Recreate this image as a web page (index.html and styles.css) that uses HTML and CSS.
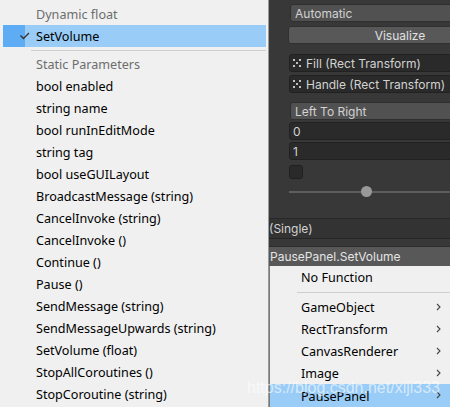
FILE: index.html
```html
<!DOCTYPE html>
<html>
<head>
<meta charset="utf-8">
<link rel="stylesheet" href="styles.css">
</head>
<body>
<div class="screen">
  <div class="inspector">
    <div class="field dropdown">Automatic</div>
    <div class="button">Visualize</div>
    <div class="field object first-object"><svg class="obj-icon" width="8" height="8" viewBox="0 0 8 8"><rect x="0" y="0" width="2" height="2"/><rect x="6" y="0" width="2" height="2"/><rect x="0" y="6" width="2" height="2"/><rect x="6" y="6" width="2" height="2"/><rect x="3" y="3" width="2" height="2"/></svg>Fill (Rect Transform)</div>
    <div class="field object"><svg class="obj-icon" width="8" height="8" viewBox="0 0 8 8"><rect x="0" y="0" width="2" height="2"/><rect x="6" y="0" width="2" height="2"/><rect x="0" y="6" width="2" height="2"/><rect x="6" y="6" width="2" height="2"/><rect x="3" y="3" width="2" height="2"/></svg>Handle (Rect Transform)</div>
    <div class="field dropdown direction">Left To Right</div>
    <div class="field input">0</div>
    <div class="field input">1</div>
    <div class="checkbox"></div>
    <div class="slider"><div class="track"></div><div class="thumb"></div></div>
    <div class="event-row">(Single)</div>
    <div class="event-bar">PausePanel.SetVolume</div>
  </div>

  <div class="menu">
    <div class="item header">Dynamic float</div>
    <div class="item selected"><span class="check"><svg width="22" height="22" viewBox="0 0 22 22"><path d="M6.5 10.5 L9.5 13.5 L15 8" fill="none" stroke="#333" stroke-width="1.4"/></svg></span>SetVolume</div>
    <div class="sep"></div>
    <div class="item header">Static Parameters</div>
    <div class="item">bool enabled</div>
    <div class="item">string name</div>
    <div class="item">bool runInEditMode</div>
    <div class="item">string tag</div>
    <div class="item">bool useGUILayout</div>
    <div class="item">BroadcastMessage (string)</div>
    <div class="item">CancelInvoke (string)</div>
    <div class="item">CancelInvoke ()</div>
    <div class="item">Continue ()</div>
    <div class="item">Pause ()</div>
    <div class="item">SendMessage (string)</div>
    <div class="item">SendMessageUpwards (string)</div>
    <div class="item">SetVolume (float)</div>
    <div class="item">StopAllCoroutines ()</div>
    <div class="item">StopCoroutine (string)</div>
  </div>

  <div class="submenu">
    <div class="sitem">No Function</div>
    <div class="ssep"></div>
    <div class="sitem">GameObject<svg class="arrow" width="5" height="8" viewBox="0 0 5 8"><path d="M1 1 L4 4 L1 7" fill="none" stroke="#444" stroke-width="1.1"/></svg></div>
    <div class="sitem">RectTransform<svg class="arrow" width="5" height="8" viewBox="0 0 5 8"><path d="M1 1 L4 4 L1 7" fill="none" stroke="#444" stroke-width="1.1"/></svg></div>
    <div class="sitem">CanvasRenderer<svg class="arrow" width="5" height="8" viewBox="0 0 5 8"><path d="M1 1 L4 4 L1 7" fill="none" stroke="#444" stroke-width="1.1"/></svg></div>
    <div class="sitem">Image<svg class="arrow" width="5" height="8" viewBox="0 0 5 8"><path d="M1 1 L4 4 L1 7" fill="none" stroke="#444" stroke-width="1.1"/></svg></div>
    <div class="sitem active">PausePanel<svg class="arrow" width="5" height="8" viewBox="0 0 5 8"><path d="M1 1 L4 4 L1 7" fill="none" stroke="#444" stroke-width="1.1"/></svg></div>
  </div>

  <div class="watermark">https://blog.csdn.net/xiji333</div>
</div>
</body>
</html>
```

FILE: styles.css
```css
* { box-sizing: border-box; }
html, body { margin: 0; padding: 0; }
body { width: 450px; height: 407px; overflow: hidden; background: #383838; }

.screen {
  position: relative;
  width: 450px;
  height: 407px;
  overflow: hidden;
  background: #383838;
}

.inspector {
  width: 520px;
  padding: 4px 8px 0 0;
  display: flex;
  flex-direction: column;
  font-family: Inter, "Noto Sans", sans-serif;
  font-size: 12px;
  color: #d2d2d2;
}

.field {
  height: 18px;
  margin-left: 290px;
  border-radius: 3px;
  display: flex;
  align-items: center;
  padding-left: 4px;
  white-space: nowrap;
}
.dropdown { background: #515151; border: 1px solid #2f2f2f; }
.button {
  height: 18px;
  margin: 4px 0 0 288px;
  background: #585858;
  border: 1px solid #303030;
  border-radius: 3px;
  display: flex;
  align-items: center;
  justify-content: center;
  color: #e0e0e0;
}
.object, .input { background: #2a2a2a; border: 1px solid #212121; margin-left: 289px; padding-left: 3px; }
.object { margin-top: 3px; }
.first-object { margin-top: 10px; }
.obj-icon { fill: #c0c0c0; margin-right: 5px; flex: none; }
.direction { margin-top: 9px; }
.input { margin-top: 2px; }

.checkbox {
  width: 14px;
  height: 14px;
  margin: 5px 0 0 289px;
  background: #2a2a2a;
  border: 1px solid #212121;
  border-radius: 3px;
}

.slider {
  position: relative;
  height: 26px;
  margin-left: 289px;
}
.track { position: absolute; left: 0; right: 0; top: 12px; height: 2px; background: #5e5e5e; }
.thumb { position: absolute; left: 72px; top: 7px; width: 11px; height: 11px; border-radius: 50%; background: #999999; }

.event-row {
  height: 21px;
  margin-top: 13px;
  padding-left: 269px;
  background: #333333;
  border-top: 1px solid #282828;
  border-bottom: 1px solid #252525;
  display: flex;
  align-items: center;
  color: #d2d2d2;
}
.event-bar {
  height: 20px;
  margin-top: 7px;
  padding-left: 270px;
  background: #585858;
  border-top: 1px solid #2c2c2c;
  display: flex;
  align-items: center;
  color: #e4e4e4;
}

.menu {
  position: absolute;
  left: 0;
  top: 0;
  width: 269px;
  height: 407px;
  background: #f0f0f0;
  border-right: 1px solid #9a9a9a;
  padding: 3px 2px 0 3px;
  font-family: "Noto Sans", "Noto Sans CJK SC", sans-serif;
  font-size: 12.6px;
  color: #000;
}
.item {
  height: 22px;
  display: flex;
  align-items: center;
  padding-left: 33px;
  white-space: nowrap;
}
.item.header { color: #6d6d6d; }
.item.selected {
  background: linear-gradient(to right, #5eacf3 0, #5eacf3 22px, #99ccf6 22px);
  padding-left: 11px;
}
.check { width: 22px; height: 22px; display: block; margin-right: 0; }
.check svg { display: block; }
.sep { height: 6px; margin-left: 28px; position: relative; }
.sep::after { content: ""; position: absolute; left: 0; right: 0; top: 3px; height: 1px; background: #cfcfcf; }

.submenu {
  position: absolute;
  left: 269px;
  top: 266px;
  width: 200px;
  height: 150px;
  background: #f0f0f0;
  border-left: 1px solid #7a7a7a;
  font-family: "Noto Sans", "Noto Sans CJK SC", sans-serif;
  font-size: 12.6px;
  color: #000;
}
.sitem {
  height: 22px;
  display: flex;
  align-items: center;
  padding-left: 31px;
  position: relative;
}
.sitem.active { background: #99ccf6; height: 24px; }
.arrow { position: absolute; left: 166px; top: 7px; }
.ssep { height: 8px; margin: 0 0 0 27px; position: relative; }
.ssep::after { content: ""; position: absolute; left: 0; right: 0; top: 4px; height: 1px; background: #cfcfcf; }

.watermark {
  position: absolute;
  left: 247px;
  top: 379px;
  font-family: "Liberation Sans", Arial, sans-serif;
  font-size: 16px;
  color: rgba(255, 255, 255, 0.6);
  white-space: nowrap;
}
```
